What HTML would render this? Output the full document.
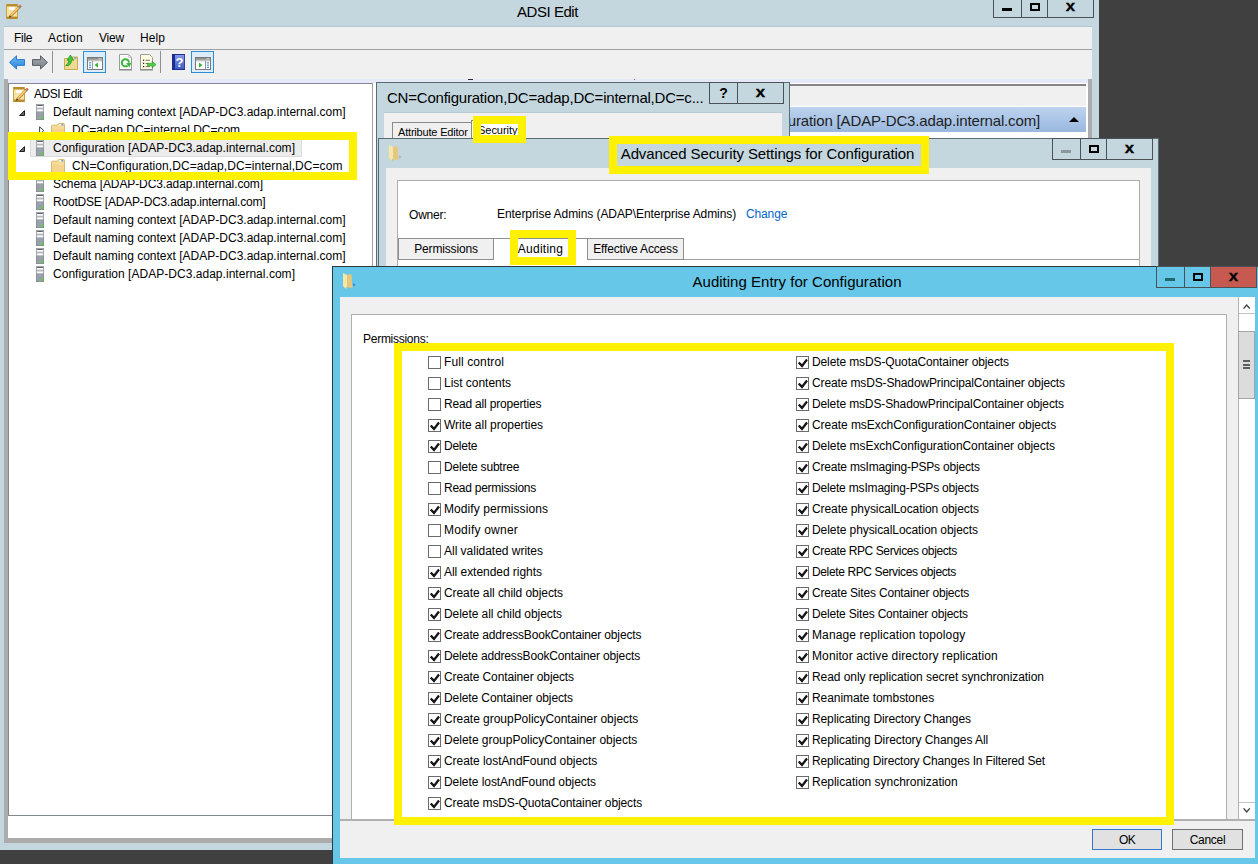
<!DOCTYPE html>
<html><head><meta charset="utf-8"><title>ADSI Edit</title>
<style>
html,body{margin:0;padding:0}
body{width:1258px;height:864px;background:#404040;overflow:hidden;position:relative;font-family:"Liberation Sans",sans-serif;font-size:12px;color:#000}
div{position:absolute;box-sizing:border-box}
.t{white-space:pre;line-height:16px;height:16px}
.tt{white-space:pre;font-size:15px;line-height:20px;height:20px}
.yb{border-style:solid;border-color:#fff100;background:transparent}
.cb{width:13px;height:13px;border:1px solid #6a6a6a;background:#fff}
.cb svg{position:absolute;left:0;top:0}
svg{position:absolute;overflow:visible}
.xg{font-weight:bold;font-size:15px;transform:scaleX(1.12);-webkit-text-stroke:0.3px #000}
</style></head><body>

<div style="left:0px;top:0px;width:1099px;height:850px;background:#c4d7df"></div>
<svg style="left:6px;top:4px" width="17" height="16" viewBox="0 0 17 16"><rect x="0" y="0" width="12" height="15" fill="#f2e4a2"/><rect x="0" y="0" width="12" height="2.4" fill="#b98a2e"/><rect x="0" y="12.6" width="12" height="2.4" fill="#b98a2e"/><rect x="0" y="0" width="1" height="15" fill="#c9a144"/><rect x="11" y="0" width="1" height="15" fill="#c9a144"/><rect x="3" y="3.2" width="5.6" height="2.6" fill="#fff"/><path d="M3.2 13.6 L4 11 L12.7 2.1 L14.3 3.7 L5.6 12.7 Z" fill="#f4b050" stroke="#8a5a1a" stroke-width="0.45"/><path d="M4.9 10.8 L12.6 2.9" stroke="#fce6b8" stroke-width="0.8"/><path d="M12 2.8 L12.9 1.9 L14.5 3.5 L13.6 4.4 Z" fill="#5a9a6a"/><path d="M12.9 1.9 L14 0.8 L15.8 2.5 L14.5 3.5 Z" fill="#e2553a"/><path d="M3.2 13.6 L3.9 11.6 L5.1 12.8 Z" fill="#2a2a2a"/></svg>
<div class="tt" style="left:0px;top:2px;width:1095px;text-align:center;letter-spacing:-0.45px">ADSI Edit</div>
<div style="left:993px;top:0px;width:29px;height:18px;border:1px solid #4a5257;border-top:none;background:#c4d7df"></div><div style="left:1021px;top:0px;width:27px;height:18px;border:1px solid #4a5257;border-top:none;background:#c4d7df"></div><div style="left:1047px;top:0px;width:47px;height:18px;border:1px solid #4a5257;border-top:none;background:#c4d7df"></div>
<div style="left:1002px;top:8px;width:10px;height:3px;background:#000"></div>
<div style="left:1030px;top:3px;width:10px;height:8px;border:2px solid #000"></div>
<div class="t xg" style="left:1047px;top:-2px;width:47px;text-align:center">x</div>
<div style="left:4px;top:26px;width:1088px;height:24px;background:#f0f0f0;border-bottom:1px solid #a0a0a0;border-top:1px solid #b4c6ce"></div>
<div class="t" style="left:14px;top:30px;letter-spacing:-0.273px;">File</div>
<div class="t" style="left:48px;top:30px;letter-spacing:0.273px;">Action</div>
<div class="t" style="left:99px;top:30px;letter-spacing:-0.199px;">View</div>
<div class="t" style="left:140px;top:30px;letter-spacing:0.078px;">Help</div>
<div style="left:4px;top:50px;width:1088px;height:29px;background:#f0f0f0"></div>
<svg style="left:0;top:48px" width="220" height="30" viewBox="0 48 220 30">
<defs><linearGradient id="gb" x1="0" y1="0" x2="0" y2="1"><stop offset="0" stop-color="#6cbcf6"/><stop offset="1" stop-color="#2a82d6"/></linearGradient>
<linearGradient id="gg" x1="0" y1="0" x2="0" y2="1"><stop offset="0" stop-color="#a4a8ae"/><stop offset="1" stop-color="#7c8088"/></linearGradient>
<linearGradient id="gh" x1="0" y1="0" x2="0" y2="1"><stop offset="0" stop-color="#8e9cea"/><stop offset="1" stop-color="#3558be"/></linearGradient></defs>
<path d="M9.5 62.4 L16.5 55.8 L16.5 59.6 L24.5 59.6 L24.5 65.4 L16.5 65.4 L16.5 69 Z" fill="url(#gb)" stroke="#2a7cd0" stroke-width="1"/>
<path d="M47.5 62.4 L40.5 55.8 L40.5 59.6 L32.5 59.6 L32.5 65.4 L40.5 65.4 L40.5 69 Z" fill="url(#gg)" stroke="#5a5e66" stroke-width="1"/>
<rect x="52" y="51" width="1" height="22" fill="#8e8e8e"/>
<path d="M64.5 69.5 L64.5 58.5 L69 58.5 L70 57 L77.5 57 L77.5 69.5 Z" fill="#f0d992" stroke="#c9aa55"/>
<rect x="74" y="57.6" width="2.6" height="1" fill="#4a8ee8"/>
<path d="M65.6 65.6 Q68.4 64 69 60.2 L67 60.2 L70.4 55 L73.6 60.2 L71.6 60.2 Q71 66.4 65.6 65.6 Z" fill="#3ecb3a" stroke="#1f8f22" stroke-width="0.7"/>
<rect x="83.5" y="51.5" width="22" height="21" fill="#ddecfb" stroke="#2b8fd6"/>
<rect x="87.5" y="57.5" width="15" height="12" fill="#fff" stroke="#7a7a7a"/>
<rect x="88" y="58" width="14" height="1.8" fill="#8f8f8f"/><rect x="98.6" y="58.3" width="1" height="1" fill="#fff"/><rect x="100.4" y="58.3" width="1" height="1" fill="#fff"/>
<rect x="88" y="60.4" width="14" height="0.8" fill="#9a9a9a"/><rect x="92.2" y="61" width="0.9" height="8" fill="#8a8a8a"/>
<rect x="89" y="62.4" width="2.2" height="1" fill="#2a7fe0"/><rect x="89" y="64.6" width="2.2" height="1" fill="#2a7fe0"/><rect x="89" y="66.8" width="2.2" height="1" fill="#2a7fe0"/>
<path d="M98 62.4 L98 67.8 L94.6 65.1 Z" fill="#35b52f"/>
<path d="M119.5 54.5 L128.6 54.5 L131.5 57.4 L131.5 69.5 L119.5 69.5 Z" fill="#fff" stroke="#9c9c9c"/><path d="M119 70 L132 70" stroke="#6e6e6e" stroke-width="0.8"/>
<path d="M128.6 54.5 L128.6 57.4 L131.5 57.4" fill="none" stroke="#b4b4b4" stroke-width="0.7"/>
<path d="M129 62.6 A3.6 3.6 0 1 0 127.6 65.6" fill="none" stroke="#3cb63a" stroke-width="2"/><path d="M126.2 63 L131.2 63 L129.4 67.4 Z" fill="#3cb63a"/>
<path d="M140.5 54.5 L149.6 54.5 L152.5 57.4 L152.5 69.5 L140.5 69.5 Z" fill="#fdfbdd" stroke="#9c9c9c"/><path d="M140 70 L153 70" stroke="#6e6e6e" stroke-width="0.8"/>
<rect x="143" y="59.6" width="1.2" height="1.2" fill="#222"/><rect x="143" y="62.8" width="1.2" height="1.2" fill="#222"/><rect x="143" y="66" width="1.2" height="1.2" fill="#222"/>
<rect x="145.6" y="59.8" width="4.4" height="0.9" fill="#6a6a6a"/><rect x="145.6" y="63" width="3" height="0.9" fill="#6a6a6a"/><rect x="145.6" y="66.2" width="4.4" height="0.9" fill="#6a6a6a"/>
<path d="M147.6 63.4 L152.2 63.4 L152.2 61.4 L156 64.6 L152.2 67.8 L152.2 65.8 L147.6 65.8 Z" fill="#4fd24a" stroke="#1f8f22" stroke-width="0.6"/>
<rect x="160" y="51" width="1" height="22" fill="#8e8e8e"/>
<rect x="172" y="54" width="13" height="16" fill="url(#gh)"/><rect x="172" y="54" width="3" height="16" fill="#1d2c8e"/><rect x="172" y="54" width="13" height="1" fill="#1d2c8e"/><rect x="172" y="69" width="13" height="1" fill="#1d2c8e"/><rect x="184" y="54" width="1" height="16" fill="#2c3ea0"/>
<rect x="191.5" y="51.5" width="22" height="21" fill="#ddecfb" stroke="#2b8fd6"/>
<rect x="195.5" y="57.5" width="15" height="12" fill="#fff" stroke="#7a7a7a"/>
<rect x="196" y="58" width="14" height="1.8" fill="#8f8f8f"/><rect x="206.6" y="58.3" width="1" height="1" fill="#fff"/><rect x="208.4" y="58.3" width="1" height="1" fill="#fff"/>
<rect x="196" y="60.4" width="14" height="0.8" fill="#9a9a9a"/><rect x="205" y="61" width="0.9" height="8" fill="#8a8a8a"/>
<rect x="206.8" y="62.4" width="2.2" height="1" fill="#2a7fe0"/><rect x="206.8" y="64.6" width="2.2" height="1" fill="#2a7fe0"/><rect x="206.8" y="66.8" width="2.2" height="1" fill="#2a7fe0"/>
<path d="M199 62.4 L199 67.8 L202.4 65.1 Z" fill="#35b52f"/>
</svg>
<div class="t" style="left:174px;top:55px;width:11px;text-align:center;color:#fff;font-weight:bold;font-size:13px">?</div>
<div style="left:4px;top:79px;width:1088px;height:764px;background:#ababab"></div>
<div style="left:8px;top:79px;width:1080px;height:759px;background:#fff"></div>
<div style="left:8px;top:79px;width:1080px;height:4px;background:#e6e9f7"></div>
<div style="left:468px;top:79px;width:5px;height:1px;background:#2a2a2a"></div>
<div style="left:634px;top:79px;width:1px;height:1px;background:#8a7a5a"></div>
<div style="left:8px;top:83px;width:365px;height:733px;background:#fff;border:1px solid #828790;border-right-color:#a0a0a0"></div>
<div style="left:8px;top:816px;width:1080px;height:22px;background:#fff"></div>
<div style="left:376px;top:83px;width:712px;height:734px;background:#fff;border:1px solid #828790;border-right:none;border-top:none"></div>
<div style="left:377px;top:84px;width:709px;height:2px;background:#858585"></div>
<div style="left:377px;top:86px;width:709px;height:20px;background:#f0f0f0"></div>
<div style="left:377px;top:107px;width:709px;height:25px;background:linear-gradient(#bdd3ee,#a9c4e6 55%,#9ab7de)"></div>
<div class="t" style="left:700px;top:111px;font-size:15px;line-height:20px;height:20px;color:#1e1e1e;width:340px;text-align:right;letter-spacing:-0.15px">Configuration [ADAP-DC3.adap.internal.com]</div>
<svg style="left:1069px;top:117px" width="10" height="5" viewBox="0 0 10 5"><path d="M0 5 L5 0 L10 5 Z" fill="#000"/></svg>
<svg style="left:13px;top:87px" width="17" height="16" viewBox="0 0 17 16"><rect x="0" y="0" width="12" height="15" fill="#f2e4a2"/><rect x="0" y="0" width="12" height="2.4" fill="#b98a2e"/><rect x="0" y="12.6" width="12" height="2.4" fill="#b98a2e"/><rect x="0" y="0" width="1" height="15" fill="#c9a144"/><rect x="11" y="0" width="1" height="15" fill="#c9a144"/><rect x="3" y="3.2" width="5.6" height="2.6" fill="#fff"/><path d="M3.2 13.6 L4 11 L12.7 2.1 L14.3 3.7 L5.6 12.7 Z" fill="#f4b050" stroke="#8a5a1a" stroke-width="0.45"/><path d="M4.9 10.8 L12.6 2.9" stroke="#fce6b8" stroke-width="0.8"/><path d="M12 2.8 L12.9 1.9 L14.5 3.5 L13.6 4.4 Z" fill="#5a9a6a"/><path d="M12.9 1.9 L14 0.8 L15.8 2.5 L14.5 3.5 Z" fill="#e2553a"/><path d="M3.2 13.6 L3.9 11.6 L5.1 12.8 Z" fill="#2a2a2a"/></svg>
<div class="t" style="left:34px;top:86px;letter-spacing:-0.448px;">ADSI Edit</div>
<svg style="left:36px;top:104px" width="8" height="16" viewBox="0 0 8 16"><rect x="0" y="0" width="8" height="16" fill="#7f878e"/><rect x="0.6" y="0.6" width="6.8" height="7.2" fill="#d6dade"/><rect x="0.6" y="7.8" width="6.8" height="7.6" fill="#99a2aa"/><rect x="1.2" y="1" width="5.6" height="0.9" fill="#3c4046"/><rect x="1.2" y="1.9" width="5.6" height="1.5" fill="#fff"/><rect x="1.2" y="4.6" width="5.6" height="0.8" fill="#70767c"/><rect x="1.2" y="5.4" width="5.6" height="1.5" fill="#fff"/><rect x="5" y="12.8" width="2" height="2" fill="#4fdc2a"/></svg>
<div class="t" style="left:53px;top:104px;letter-spacing:0.007px;">Default naming context [ADAP-DC3.adap.internal.com]</div>
<svg style="left:19px;top:110px" width="6" height="6" viewBox="0 0 6 6"><path d="M5.5 0.6 L5.5 5.5 L0.6 5.5 Z" fill="#6a6a6a" stroke="#1e1e1e" stroke-width="1"/></svg>
<svg style="left:51px;top:123px" width="14" height="14" viewBox="0 0 14 14"><path d="M0.5 13.5 L0.5 3.2 Q0.5 2.2 1.5 2.2 L6.4 2.2 L7.4 0.6 L13 0.6 Q13.5 0.6 13.5 1.4 L13.5 13.5 Z" fill="#f6dc98" stroke="#d9b96a"/><path d="M1 6 L13 6 L13 13 L1 13 Z" fill="#f4d38c"/><rect x="8.2" y="1.2" width="2.4" height="1.3" fill="#fff"/><rect x="10.4" y="1.2" width="1.8" height="1.3" fill="#4a8ee8"/></svg>
<div class="t" style="left:72px;top:122px;letter-spacing:-0.012px;">DC=adap,DC=internal,DC=com</div>
<svg style="left:39px;top:126px" width="6" height="9" viewBox="0 0 6 9"><path d="M0.6 0.8 L4.8 4.5 L0.6 8.2 Z" fill="#fff" stroke="#404040" stroke-width="1"/></svg>
<div style="left:30px;top:138px;width:272px;height:19px;background:#ececec;border:1px solid #dcdcdc"></div>
<svg style="left:36px;top:140px" width="8" height="16" viewBox="0 0 8 16"><rect x="0" y="0" width="8" height="16" fill="#7f878e"/><rect x="0.6" y="0.6" width="6.8" height="7.2" fill="#d6dade"/><rect x="0.6" y="7.8" width="6.8" height="7.6" fill="#99a2aa"/><rect x="1.2" y="1" width="5.6" height="0.9" fill="#3c4046"/><rect x="1.2" y="1.9" width="5.6" height="1.5" fill="#fff"/><rect x="1.2" y="4.6" width="5.6" height="0.8" fill="#70767c"/><rect x="1.2" y="5.4" width="5.6" height="1.5" fill="#fff"/><rect x="5" y="12.8" width="2" height="2" fill="#4fdc2a"/></svg>
<div class="t" style="left:53px;top:140px;letter-spacing:0.029px;">Configuration [ADAP-DC3.adap.internal.com]</div>
<svg style="left:19px;top:146px" width="6" height="6" viewBox="0 0 6 6"><path d="M5.5 0.6 L5.5 5.5 L0.6 5.5 Z" fill="#6a6a6a" stroke="#1e1e1e" stroke-width="1"/></svg>
<svg style="left:51px;top:159px" width="14" height="14" viewBox="0 0 14 14"><path d="M0.5 13.5 L0.5 3.2 Q0.5 2.2 1.5 2.2 L6.4 2.2 L7.4 0.6 L13 0.6 Q13.5 0.6 13.5 1.4 L13.5 13.5 Z" fill="#f6dc98" stroke="#d9b96a"/><path d="M1 6 L13 6 L13 13 L1 13 Z" fill="#f4d38c"/><rect x="8.2" y="1.2" width="2.4" height="1.3" fill="#fff"/><rect x="10.4" y="1.2" width="1.8" height="1.3" fill="#4a8ee8"/></svg>
<div class="t" style="left:72px;top:158px;letter-spacing:0.070px;">CN=Configuration,DC=adap,DC=internal,DC=com</div>
<svg style="left:36px;top:176px" width="8" height="16" viewBox="0 0 8 16"><rect x="0" y="0" width="8" height="16" fill="#7f878e"/><rect x="0.6" y="0.6" width="6.8" height="7.2" fill="#d6dade"/><rect x="0.6" y="7.8" width="6.8" height="7.6" fill="#99a2aa"/><rect x="1.2" y="1" width="5.6" height="0.9" fill="#3c4046"/><rect x="1.2" y="1.9" width="5.6" height="1.5" fill="#fff"/><rect x="1.2" y="4.6" width="5.6" height="0.8" fill="#70767c"/><rect x="1.2" y="5.4" width="5.6" height="1.5" fill="#fff"/><rect x="5" y="12.8" width="2" height="2" fill="#4fdc2a"/></svg>
<div class="t" style="left:53px;top:176px;letter-spacing:-0.098px;">Schema [ADAP-DC3.adap.internal.com]</div>
<svg style="left:36px;top:194px" width="8" height="16" viewBox="0 0 8 16"><rect x="0" y="0" width="8" height="16" fill="#7f878e"/><rect x="0.6" y="0.6" width="6.8" height="7.2" fill="#d6dade"/><rect x="0.6" y="7.8" width="6.8" height="7.6" fill="#99a2aa"/><rect x="1.2" y="1" width="5.6" height="0.9" fill="#3c4046"/><rect x="1.2" y="1.9" width="5.6" height="1.5" fill="#fff"/><rect x="1.2" y="4.6" width="5.6" height="0.8" fill="#70767c"/><rect x="1.2" y="5.4" width="5.6" height="1.5" fill="#fff"/><rect x="5" y="12.8" width="2" height="2" fill="#4fdc2a"/></svg>
<div class="t" style="left:53px;top:194px;letter-spacing:-0.193px;">RootDSE [ADAP-DC3.adap.internal.com]</div>
<svg style="left:36px;top:212px" width="8" height="16" viewBox="0 0 8 16"><rect x="0" y="0" width="8" height="16" fill="#7f878e"/><rect x="0.6" y="0.6" width="6.8" height="7.2" fill="#d6dade"/><rect x="0.6" y="7.8" width="6.8" height="7.6" fill="#99a2aa"/><rect x="1.2" y="1" width="5.6" height="0.9" fill="#3c4046"/><rect x="1.2" y="1.9" width="5.6" height="1.5" fill="#fff"/><rect x="1.2" y="4.6" width="5.6" height="0.8" fill="#70767c"/><rect x="1.2" y="5.4" width="5.6" height="1.5" fill="#fff"/><rect x="5" y="12.8" width="2" height="2" fill="#4fdc2a"/></svg>
<div class="t" style="left:53px;top:212px;letter-spacing:0.007px;">Default naming context [ADAP-DC3.adap.internal.com]</div>
<svg style="left:36px;top:230px" width="8" height="16" viewBox="0 0 8 16"><rect x="0" y="0" width="8" height="16" fill="#7f878e"/><rect x="0.6" y="0.6" width="6.8" height="7.2" fill="#d6dade"/><rect x="0.6" y="7.8" width="6.8" height="7.6" fill="#99a2aa"/><rect x="1.2" y="1" width="5.6" height="0.9" fill="#3c4046"/><rect x="1.2" y="1.9" width="5.6" height="1.5" fill="#fff"/><rect x="1.2" y="4.6" width="5.6" height="0.8" fill="#70767c"/><rect x="1.2" y="5.4" width="5.6" height="1.5" fill="#fff"/><rect x="5" y="12.8" width="2" height="2" fill="#4fdc2a"/></svg>
<div class="t" style="left:53px;top:230px;letter-spacing:0.007px;">Default naming context [ADAP-DC3.adap.internal.com]</div>
<svg style="left:36px;top:248px" width="8" height="16" viewBox="0 0 8 16"><rect x="0" y="0" width="8" height="16" fill="#7f878e"/><rect x="0.6" y="0.6" width="6.8" height="7.2" fill="#d6dade"/><rect x="0.6" y="7.8" width="6.8" height="7.6" fill="#99a2aa"/><rect x="1.2" y="1" width="5.6" height="0.9" fill="#3c4046"/><rect x="1.2" y="1.9" width="5.6" height="1.5" fill="#fff"/><rect x="1.2" y="4.6" width="5.6" height="0.8" fill="#70767c"/><rect x="1.2" y="5.4" width="5.6" height="1.5" fill="#fff"/><rect x="5" y="12.8" width="2" height="2" fill="#4fdc2a"/></svg>
<div class="t" style="left:53px;top:248px;letter-spacing:0.007px;">Default naming context [ADAP-DC3.adap.internal.com]</div>
<svg style="left:36px;top:266px" width="8" height="16" viewBox="0 0 8 16"><rect x="0" y="0" width="8" height="16" fill="#7f878e"/><rect x="0.6" y="0.6" width="6.8" height="7.2" fill="#d6dade"/><rect x="0.6" y="7.8" width="6.8" height="7.6" fill="#99a2aa"/><rect x="1.2" y="1" width="5.6" height="0.9" fill="#3c4046"/><rect x="1.2" y="1.9" width="5.6" height="1.5" fill="#fff"/><rect x="1.2" y="4.6" width="5.6" height="0.8" fill="#70767c"/><rect x="1.2" y="5.4" width="5.6" height="1.5" fill="#fff"/><rect x="5" y="12.8" width="2" height="2" fill="#4fdc2a"/></svg>
<div class="t" style="left:53px;top:266px;letter-spacing:0.029px;">Configuration [ADAP-DC3.adap.internal.com]</div>
<div style="left:376px;top:82px;width:414px;height:518px;background:#c4d7df;border:1px solid #5b6b72"></div>
<div class="tt" style="left:387px;top:88px;letter-spacing:-0.216px;">CN=Configuration,DC=adap,DC=internal,DC=c...</div>
<div style="left:709px;top:82px;width:29px;height:22px;border:1px solid #4a5257;background:#c4d7df"></div>
<div style="left:737px;top:82px;width:47px;height:22px;border:1px solid #4a5257;background:#c4d7df"></div>
<div class="t" style="left:709px;top:85px;width:29px;text-align:center;font-weight:bold;font-size:14px">?</div>
<div class="t xg" style="left:737px;top:84px;width:47px;text-align:center">x</div>
<div style="left:384px;top:112px;width:398px;height:488px;background:#f0f0f0;border-top:1px solid #b9c9d0"></div>
<div style="left:392px;top:122px;width:80px;height:18px;background:#f0f0f0;border:1px solid #8a8a8a"></div>
<div class="t" style="left:398px;top:124px;letter-spacing:-0.188px;font-size:11px">Attribute Editor</div>
<div style="left:471px;top:120px;width:54px;height:20px;background:#fff;border:1px solid #8a8a8a"></div>
<div class="t" style="left:478px;top:122px;letter-spacing:-0.031px;font-size:11px">Security</div>
<div style="left:378px;top:138px;width:781px;height:562px;background:#c4d7df;border:1px solid #5b6b72"></div>
<svg style="left:389px;top:145px" width="13" height="16" viewBox="0 0 13 16"><path d="M0 0 L4.2 2 L4.2 15.4 L2.4 15.4 L0 13 Z" fill="#f6e7a6"/><path d="M4.2 1.4 L8.6 1.4 L9 10 L9.8 14.4 L4.2 14.4 Z" fill="#e6c878"/><path d="M2.4 15.4 L4.2 15.4 L4.2 13.4 Z" fill="#c9aa5a"/><path d="M10 10.2 L12.6 11.4 L10.4 14 Z" fill="#9fb6da"/></svg>
<div class="tt" style="left:386px;top:144px;letter-spacing:-0.114px;width:763px;text-align:center">Advanced Security Settings for Configuration</div>
<div style="left:1052px;top:138px;width:29px;height:22px;border:1px solid #4a5257;background:#c4d7df"></div><div style="left:1080px;top:138px;width:27px;height:22px;border:1px solid #4a5257;background:#c4d7df"></div><div style="left:1106px;top:138px;width:47px;height:22px;border:1px solid #4a5257;background:#c4d7df"></div>
<div style="left:1061px;top:150px;width:10px;height:3px;background:#8b979c"></div>
<div style="left:1089px;top:145px;width:10px;height:8px;border:2px solid #000"></div>
<div class="t xg" style="left:1106px;top:140px;width:47px;text-align:center">x</div>
<div style="left:386px;top:168px;width:765px;height:532px;background:#f0f0f0"></div>
<div style="left:397px;top:180px;width:743px;height:520px;background:#fff;border:1px solid #adadad"></div>
<div class="t" style="left:409px;top:207px;letter-spacing:-0.198px;">Owner:</div>
<div class="t" style="left:497px;top:206px;letter-spacing:-0.07px">Enterprise Admins (ADAP\Enterprise Admins)</div>
<div class="t" style="left:746px;top:206px;letter-spacing:-0.133px;color:#0066cc">Change</div>
<div style="left:684px;top:259px;width:455px;height:1px;background:#a0a0a0"></div>
<div style="left:398px;top:238px;width:96px;height:22px;background:#f0f0f0;border:1px solid #8e8e8e"></div>
<div class="t" style="left:398px;top:241px;letter-spacing:-0.169px;width:96px;text-align:center">Permissions</div>
<div style="left:587px;top:238px;width:97px;height:22px;background:#f0f0f0;border:1px solid #8e8e8e"></div>
<div class="t" style="left:587px;top:241px;letter-spacing:-0.166px;width:97px;text-align:center">Effective Access</div>
<div style="left:493px;top:238px;width:95px;height:22px;background:#fff;border:1px solid #8e8e8e;border-bottom:none"></div>
<div class="t" style="left:493px;top:241px;letter-spacing:0.266px;width:95px;text-align:center">Auditing</div>
<div style="left:332px;top:266px;width:928px;height:604px;background:#66c7e8;border:1px solid #2c3a40"></div>
<svg style="left:343px;top:273px" width="13" height="16" viewBox="0 0 13 16"><path d="M0 0 L4.2 2 L4.2 15.4 L2.4 15.4 L0 13 Z" fill="#f6e7a6"/><path d="M4.2 1.4 L8.6 1.4 L9 10 L9.8 14.4 L4.2 14.4 Z" fill="#e6c878"/><path d="M2.4 15.4 L4.2 15.4 L4.2 13.4 Z" fill="#c9aa5a"/><path d="M10 10.2 L12.6 11.4 L10.4 14 Z" fill="#3b82e6"/></svg>
<div class="tt" style="left:340px;top:272px;letter-spacing:0.017px;width:914px;text-align:center">Auditing Entry for Configuration</div>
<div style="left:1156px;top:266px;width:29px;height:22px;border:1px solid #4a5257;background:#66c7e8"></div><div style="left:1184px;top:266px;width:27px;height:22px;border:1px solid #4a5257;background:#66c7e8"></div><div style="left:1210px;top:266px;width:47px;height:22px;border:1px solid #4a5257;background:#c65a50"></div>
<div style="left:1165px;top:278px;width:10px;height:3px;background:#1f6a72"></div>
<div style="left:1193px;top:273px;width:10px;height:8px;border:2px solid #000"></div>
<div class="t xg" style="left:1210px;top:268px;width:47px;text-align:center">x</div>
<div style="left:340px;top:297px;width:915px;height:561px;background:#f0f0f0"></div>
<div style="left:351px;top:314px;width:876px;height:507px;background:#fff;border:1px solid #b0b0b0"></div>
<div style="left:1238px;top:297px;width:17px;height:523px;background:#fff;border-left:1px solid #b4b4b4"></div>
<div style="left:1238px;top:331px;width:17px;height:68px;background:#dcdcdc;border:1px solid #a4a4a4"></div>
<div style="left:1243px;top:360px;width:7px;height:2px;background:#5e5e5e"></div>
<div style="left:1243px;top:363.5px;width:7px;height:2.0px;background:#5e5e5e"></div>
<div style="left:1243px;top:367px;width:7px;height:2px;background:#5e5e5e"></div>
<svg style="left:1243px;top:303px" width="8" height="7" viewBox="0 0 8 7"><path d="M0.6 5.6 L3.7 2 L6.8 5.6" fill="none" stroke="#404040" stroke-width="1.4"/></svg>
<svg style="left:1243px;top:807px" width="8" height="7" viewBox="0 0 8 7"><path d="M0.6 1.4 L3.7 5 L6.8 1.4" fill="none" stroke="#404040" stroke-width="1.4"/></svg>
<div style="left:1239px;top:802px;width:16px;height:1px;background:#c4c4c4"></div>
<div style="left:1239px;top:313px;width:16px;height:1px;background:#c4c4c4"></div>
<div style="left:340px;top:819px;width:915px;height:2px;background:#b0b0b0"></div>
<div class="t" style="left:363px;top:331px;letter-spacing:-0.266px;">Permissions:</div>
<div class="cb" style="left:428px;top:356px"></div>
<div class="t" style="left:444px;top:354px;letter-spacing:0.109px;">Full control</div>
<div class="cb" style="left:428px;top:377px"></div>
<div class="t" style="left:444px;top:375px;letter-spacing:-0.029px;">List contents</div>
<div class="cb" style="left:428px;top:398px"></div>
<div class="t" style="left:444px;top:396px;letter-spacing:-0.183px;">Read all properties</div>
<div class="cb" style="left:428px;top:419px"><svg width="11" height="11" viewBox="0 0 11 11"><path d="M1.7 5.5 L5 8.9 L10 2.5" fill="none" stroke="#151515" stroke-width="2.3"/></svg></div>
<div class="t" style="left:444px;top:417px;letter-spacing:-0.041px;">Write all properties</div>
<div class="cb" style="left:428px;top:440px"><svg width="11" height="11" viewBox="0 0 11 11"><path d="M1.7 5.5 L5 8.9 L10 2.5" fill="none" stroke="#151515" stroke-width="2.3"/></svg></div>
<div class="t" style="left:444px;top:438px;letter-spacing:-0.240px;">Delete</div>
<div class="cb" style="left:428px;top:461px"></div>
<div class="t" style="left:444px;top:459px;letter-spacing:-0.200px;">Delete subtree</div>
<div class="cb" style="left:428px;top:482px"></div>
<div class="t" style="left:444px;top:480px;letter-spacing:-0.253px;">Read permissions</div>
<div class="cb" style="left:428px;top:503px"><svg width="11" height="11" viewBox="0 0 11 11"><path d="M1.7 5.5 L5 8.9 L10 2.5" fill="none" stroke="#151515" stroke-width="2.3"/></svg></div>
<div class="t" style="left:444px;top:501px;letter-spacing:0.072px;">Modify permissions</div>
<div class="cb" style="left:428px;top:524px"></div>
<div class="t" style="left:444px;top:522px;letter-spacing:0.219px;">Modify owner</div>
<div class="cb" style="left:428px;top:545px"></div>
<div class="t" style="left:444px;top:543px;letter-spacing:-0.019px;">All validated writes</div>
<div class="cb" style="left:428px;top:566px"><svg width="11" height="11" viewBox="0 0 11 11"><path d="M1.7 5.5 L5 8.9 L10 2.5" fill="none" stroke="#151515" stroke-width="2.3"/></svg></div>
<div class="t" style="left:444px;top:564px;letter-spacing:-0.039px;">All extended rights</div>
<div class="cb" style="left:428px;top:587px"><svg width="11" height="11" viewBox="0 0 11 11"><path d="M1.7 5.5 L5 8.9 L10 2.5" fill="none" stroke="#151515" stroke-width="2.3"/></svg></div>
<div class="t" style="left:444px;top:585px;letter-spacing:-0.072px;">Create all child objects</div>
<div class="cb" style="left:428px;top:608px"><svg width="11" height="11" viewBox="0 0 11 11"><path d="M1.7 5.5 L5 8.9 L10 2.5" fill="none" stroke="#151515" stroke-width="2.3"/></svg></div>
<div class="t" style="left:444px;top:606px;letter-spacing:-0.059px;">Delete all child objects</div>
<div class="cb" style="left:428px;top:629px"><svg width="11" height="11" viewBox="0 0 11 11"><path d="M1.7 5.5 L5 8.9 L10 2.5" fill="none" stroke="#151515" stroke-width="2.3"/></svg></div>
<div class="t" style="left:444px;top:627px;letter-spacing:-0.158px;">Create addressBookContainer objects</div>
<div class="cb" style="left:428px;top:650px"><svg width="11" height="11" viewBox="0 0 11 11"><path d="M1.7 5.5 L5 8.9 L10 2.5" fill="none" stroke="#151515" stroke-width="2.3"/></svg></div>
<div class="t" style="left:444px;top:648px;letter-spacing:-0.156px;">Delete addressBookContainer objects</div>
<div class="cb" style="left:428px;top:671px"><svg width="11" height="11" viewBox="0 0 11 11"><path d="M1.7 5.5 L5 8.9 L10 2.5" fill="none" stroke="#151515" stroke-width="2.3"/></svg></div>
<div class="t" style="left:444px;top:669px;letter-spacing:-0.115px;">Create Container objects</div>
<div class="cb" style="left:428px;top:692px"><svg width="11" height="11" viewBox="0 0 11 11"><path d="M1.7 5.5 L5 8.9 L10 2.5" fill="none" stroke="#151515" stroke-width="2.3"/></svg></div>
<div class="t" style="left:444px;top:690px;letter-spacing:-0.101px;">Delete Container objects</div>
<div class="cb" style="left:428px;top:713px"><svg width="11" height="11" viewBox="0 0 11 11"><path d="M1.7 5.5 L5 8.9 L10 2.5" fill="none" stroke="#151515" stroke-width="2.3"/></svg></div>
<div class="t" style="left:444px;top:711px;letter-spacing:-0.034px;">Create groupPolicyContainer objects</div>
<div class="cb" style="left:428px;top:734px"><svg width="11" height="11" viewBox="0 0 11 11"><path d="M1.7 5.5 L5 8.9 L10 2.5" fill="none" stroke="#151515" stroke-width="2.3"/></svg></div>
<div class="t" style="left:444px;top:732px;letter-spacing:-0.025px;">Delete groupPolicyContainer objects</div>
<div class="cb" style="left:428px;top:755px"><svg width="11" height="11" viewBox="0 0 11 11"><path d="M1.7 5.5 L5 8.9 L10 2.5" fill="none" stroke="#151515" stroke-width="2.3"/></svg></div>
<div class="t" style="left:444px;top:753px;letter-spacing:-0.056px;">Create lostAndFound objects</div>
<div class="cb" style="left:428px;top:776px"><svg width="11" height="11" viewBox="0 0 11 11"><path d="M1.7 5.5 L5 8.9 L10 2.5" fill="none" stroke="#151515" stroke-width="2.3"/></svg></div>
<div class="t" style="left:444px;top:774px;letter-spacing:-0.053px;">Delete lostAndFound objects</div>
<div class="cb" style="left:428px;top:797px"><svg width="11" height="11" viewBox="0 0 11 11"><path d="M1.7 5.5 L5 8.9 L10 2.5" fill="none" stroke="#151515" stroke-width="2.3"/></svg></div>
<div class="t" style="left:444px;top:795px;letter-spacing:-0.120px;">Create msDS-QuotaContainer objects</div>
<div class="cb" style="left:796px;top:356px"><svg width="11" height="11" viewBox="0 0 11 11"><path d="M1.7 5.5 L5 8.9 L10 2.5" fill="none" stroke="#151515" stroke-width="2.3"/></svg></div>
<div class="t" style="left:812px;top:354px;letter-spacing:-0.114px;">Delete msDS-QuotaContainer objects</div>
<div class="cb" style="left:796px;top:377px"><svg width="11" height="11" viewBox="0 0 11 11"><path d="M1.7 5.5 L5 8.9 L10 2.5" fill="none" stroke="#151515" stroke-width="2.3"/></svg></div>
<div class="t" style="left:812px;top:375px;letter-spacing:-0.134px;">Create msDS-ShadowPrincipalContainer objects</div>
<div class="cb" style="left:796px;top:398px"><svg width="11" height="11" viewBox="0 0 11 11"><path d="M1.7 5.5 L5 8.9 L10 2.5" fill="none" stroke="#151515" stroke-width="2.3"/></svg></div>
<div class="t" style="left:812px;top:396px;letter-spacing:-0.127px;">Delete msDS-ShadowPrincipalContainer objects</div>
<div class="cb" style="left:796px;top:419px"><svg width="11" height="11" viewBox="0 0 11 11"><path d="M1.7 5.5 L5 8.9 L10 2.5" fill="none" stroke="#151515" stroke-width="2.3"/></svg></div>
<div class="t" style="left:812px;top:417px;letter-spacing:-0.063px;">Create msExchConfigurationContainer objects</div>
<div class="cb" style="left:796px;top:440px"><svg width="11" height="11" viewBox="0 0 11 11"><path d="M1.7 5.5 L5 8.9 L10 2.5" fill="none" stroke="#151515" stroke-width="2.3"/></svg></div>
<div class="t" style="left:812px;top:438px;letter-spacing:-0.060px;">Delete msExchConfigurationContainer objects</div>
<div class="cb" style="left:796px;top:461px"><svg width="11" height="11" viewBox="0 0 11 11"><path d="M1.7 5.5 L5 8.9 L10 2.5" fill="none" stroke="#151515" stroke-width="2.3"/></svg></div>
<div class="t" style="left:812px;top:459px;letter-spacing:-0.197px;">Create msImaging-PSPs objects</div>
<div class="cb" style="left:796px;top:482px"><svg width="11" height="11" viewBox="0 0 11 11"><path d="M1.7 5.5 L5 8.9 L10 2.5" fill="none" stroke="#151515" stroke-width="2.3"/></svg></div>
<div class="t" style="left:812px;top:480px;letter-spacing:-0.179px;">Delete msImaging-PSPs objects</div>
<div class="cb" style="left:796px;top:503px"><svg width="11" height="11" viewBox="0 0 11 11"><path d="M1.7 5.5 L5 8.9 L10 2.5" fill="none" stroke="#151515" stroke-width="2.3"/></svg></div>
<div class="t" style="left:812px;top:501px;letter-spacing:-0.082px;">Create physicalLocation objects</div>
<div class="cb" style="left:796px;top:524px"><svg width="11" height="11" viewBox="0 0 11 11"><path d="M1.7 5.5 L5 8.9 L10 2.5" fill="none" stroke="#151515" stroke-width="2.3"/></svg></div>
<div class="t" style="left:812px;top:522px;letter-spacing:-0.071px;">Delete physicalLocation objects</div>
<div class="cb" style="left:796px;top:545px"><svg width="11" height="11" viewBox="0 0 11 11"><path d="M1.7 5.5 L5 8.9 L10 2.5" fill="none" stroke="#151515" stroke-width="2.3"/></svg></div>
<div class="t" style="left:812px;top:543px;letter-spacing:-0.389px;">Create RPC Services objects</div>
<div class="cb" style="left:796px;top:566px"><svg width="11" height="11" viewBox="0 0 11 11"><path d="M1.7 5.5 L5 8.9 L10 2.5" fill="none" stroke="#151515" stroke-width="2.3"/></svg></div>
<div class="t" style="left:812px;top:564px;letter-spacing:-0.376px;">Delete RPC Services objects</div>
<div class="cb" style="left:796px;top:587px"><svg width="11" height="11" viewBox="0 0 11 11"><path d="M1.7 5.5 L5 8.9 L10 2.5" fill="none" stroke="#151515" stroke-width="2.3"/></svg></div>
<div class="t" style="left:812px;top:585px;letter-spacing:-0.188px;">Create Sites Container objects</div>
<div class="cb" style="left:796px;top:608px"><svg width="11" height="11" viewBox="0 0 11 11"><path d="M1.7 5.5 L5 8.9 L10 2.5" fill="none" stroke="#151515" stroke-width="2.3"/></svg></div>
<div class="t" style="left:812px;top:606px;letter-spacing:-0.184px;">Delete Sites Container objects</div>
<div class="cb" style="left:796px;top:629px"><svg width="11" height="11" viewBox="0 0 11 11"><path d="M1.7 5.5 L5 8.9 L10 2.5" fill="none" stroke="#151515" stroke-width="2.3"/></svg></div>
<div class="t" style="left:812px;top:627px;letter-spacing:0.118px;">Manage replication topology</div>
<div class="cb" style="left:796px;top:650px"><svg width="11" height="11" viewBox="0 0 11 11"><path d="M1.7 5.5 L5 8.9 L10 2.5" fill="none" stroke="#151515" stroke-width="2.3"/></svg></div>
<div class="t" style="left:812px;top:648px;letter-spacing:0.106px;">Monitor active directory replication</div>
<div class="cb" style="left:796px;top:671px"><svg width="11" height="11" viewBox="0 0 11 11"><path d="M1.7 5.5 L5 8.9 L10 2.5" fill="none" stroke="#151515" stroke-width="2.3"/></svg></div>
<div class="t" style="left:812px;top:669px;letter-spacing:-0.066px;">Read only replication secret synchronization</div>
<div class="cb" style="left:796px;top:692px"><svg width="11" height="11" viewBox="0 0 11 11"><path d="M1.7 5.5 L5 8.9 L10 2.5" fill="none" stroke="#151515" stroke-width="2.3"/></svg></div>
<div class="t" style="left:812px;top:690px;letter-spacing:-0.065px;">Reanimate tombstones</div>
<div class="cb" style="left:796px;top:713px"><svg width="11" height="11" viewBox="0 0 11 11"><path d="M1.7 5.5 L5 8.9 L10 2.5" fill="none" stroke="#151515" stroke-width="2.3"/></svg></div>
<div class="t" style="left:812px;top:711px;letter-spacing:-0.110px;">Replicating Directory Changes</div>
<div class="cb" style="left:796px;top:734px"><svg width="11" height="11" viewBox="0 0 11 11"><path d="M1.7 5.5 L5 8.9 L10 2.5" fill="none" stroke="#151515" stroke-width="2.3"/></svg></div>
<div class="t" style="left:812px;top:732px;letter-spacing:-0.060px;">Replicating Directory Changes All</div>
<div class="cb" style="left:796px;top:755px"><svg width="11" height="11" viewBox="0 0 11 11"><path d="M1.7 5.5 L5 8.9 L10 2.5" fill="none" stroke="#151515" stroke-width="2.3"/></svg></div>
<div class="t" style="left:812px;top:753px;letter-spacing:-0.158px;">Replicating Directory Changes In Filtered Set</div>
<div class="cb" style="left:796px;top:776px"><svg width="11" height="11" viewBox="0 0 11 11"><path d="M1.7 5.5 L5 8.9 L10 2.5" fill="none" stroke="#151515" stroke-width="2.3"/></svg></div>
<div class="t" style="left:812px;top:774px;letter-spacing:-0.015px;">Replication synchronization</div>
<div style="left:1092px;top:829px;width:70px;height:21px;background:#e1e1e1;border:1px solid #3377cc"></div>
<div class="t" style="left:1092px;top:832px;letter-spacing:-0.672px;width:70px;text-align:center">OK</div>
<div style="left:1172px;top:829px;width:71px;height:21px;background:#e1e1e1;border:1px solid #707070"></div>
<div class="t" style="left:1172px;top:832px;letter-spacing:-0.268px;width:71px;text-align:center">Cancel</div>
<div class="yb" style="left:8px;top:132px;width:349px;height:48px;border-width:8px 8px 8px 8px"></div>
<div class="yb" style="left:473px;top:116px;width:53px;height:27px;border-width:8px 8px 8px 8px"></div>
<div class="yb" style="left:609px;top:136px;width:320px;height:38px;border-width:8px 8px 8px 8px"></div>
<div class="yb" style="left:510px;top:230px;width:66px;height:35px;border-width:8px 8px 8px 8px"></div>
<div class="yb" style="left:394px;top:343px;width:780px;height:482px;border-width:8px 8px 8px 8px"></div>
</body></html>
